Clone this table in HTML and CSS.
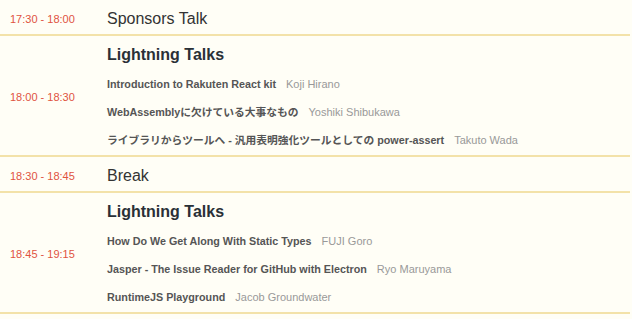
FILE: index.html
```html
<!DOCTYPE html>
<html lang="ja">
<head>
<meta charset="utf-8">
<link rel="stylesheet" href="styles.css">
</head>
<body>
<div class="schedule">
  <div class="row">
    <div class="time">17:30 - 18:00</div>
    <div class="content"><div class="title">Sponsors Talk</div></div>
  </div>
  <div class="row session">
    <div class="time">18:00 - 18:30</div>
    <div class="content">
      <div class="heading">Lightning Talks</div>
      <ul class="talks">
        <li><span class="talk">Introduction to Rakuten React kit</span><span class="speaker">Koji Hirano</span></li>
        <li><span class="talk">WebAssemblyに欠けている大事なもの</span><span class="speaker">Yoshiki Shibukawa</span></li>
        <li><span class="talk">ライブラリからツールへ - 汎用表明強化ツールとしての power-assert</span><span class="speaker">Takuto Wada</span></li>
      </ul>
    </div>
  </div>
  <div class="row">
    <div class="time">18:30 - 18:45</div>
    <div class="content"><div class="title">Break</div></div>
  </div>
  <div class="row session">
    <div class="time">18:45 - 19:15</div>
    <div class="content">
      <div class="heading">Lightning Talks</div>
      <ul class="talks">
        <li><span class="talk">How Do We Get Along With Static Types</span><span class="speaker">FUJI Goro</span></li>
        <li><span class="talk">Jasper - The Issue Reader for GitHub with Electron</span><span class="speaker">Ryo Maruyama</span></li>
        <li><span class="talk">RuntimeJS Playground</span><span class="speaker">Jacob Groundwater</span></li>
      </ul>
    </div>
  </div>
</div>
</body>
</html>
```

FILE: styles.css
```css
html, body {
  margin: 0;
  padding: 0;
  background: #fffef6;
}
body {
  font-family: "Liberation Sans", Arial, "Noto Sans CJK JP", sans-serif;
  color: #333;
}
.schedule {
  width: 630px;
}
.row {
  display: flex;
  border-bottom: 2px solid #f3e2a9;
  padding: 9px 0 5px;
}
.row.session {
  padding: 9px 0 6px;
}
.time {
  width: 107px;
  flex: none;
  padding-left: 10px;
  box-sizing: border-box;
  align-self: center;
  color: #e0533f;
  font-size: 11px;
  line-height: 20px;
}
.content {
  flex: 1;
}
.title {
  font-size: 16px;
  line-height: 20px;
  color: #333;
}
.heading {
  font-size: 16px;
  line-height: 20px;
  font-weight: bold;
  color: #2a3036;
}
.talks {
  list-style: none;
  margin: 8px 0 0;
  padding: 0;
  display: flex;
  flex-direction: column;
  gap: 8px;
}
.talks li {
  line-height: 20px;
  height: 20px;
  white-space: nowrap;
}
.talk {
  font-size: 10.75px;
  font-weight: bold;
  color: #555;
}
.speaker {
  font-size: 11px;
  color: #999;
  margin-left: 10px;
}
```
